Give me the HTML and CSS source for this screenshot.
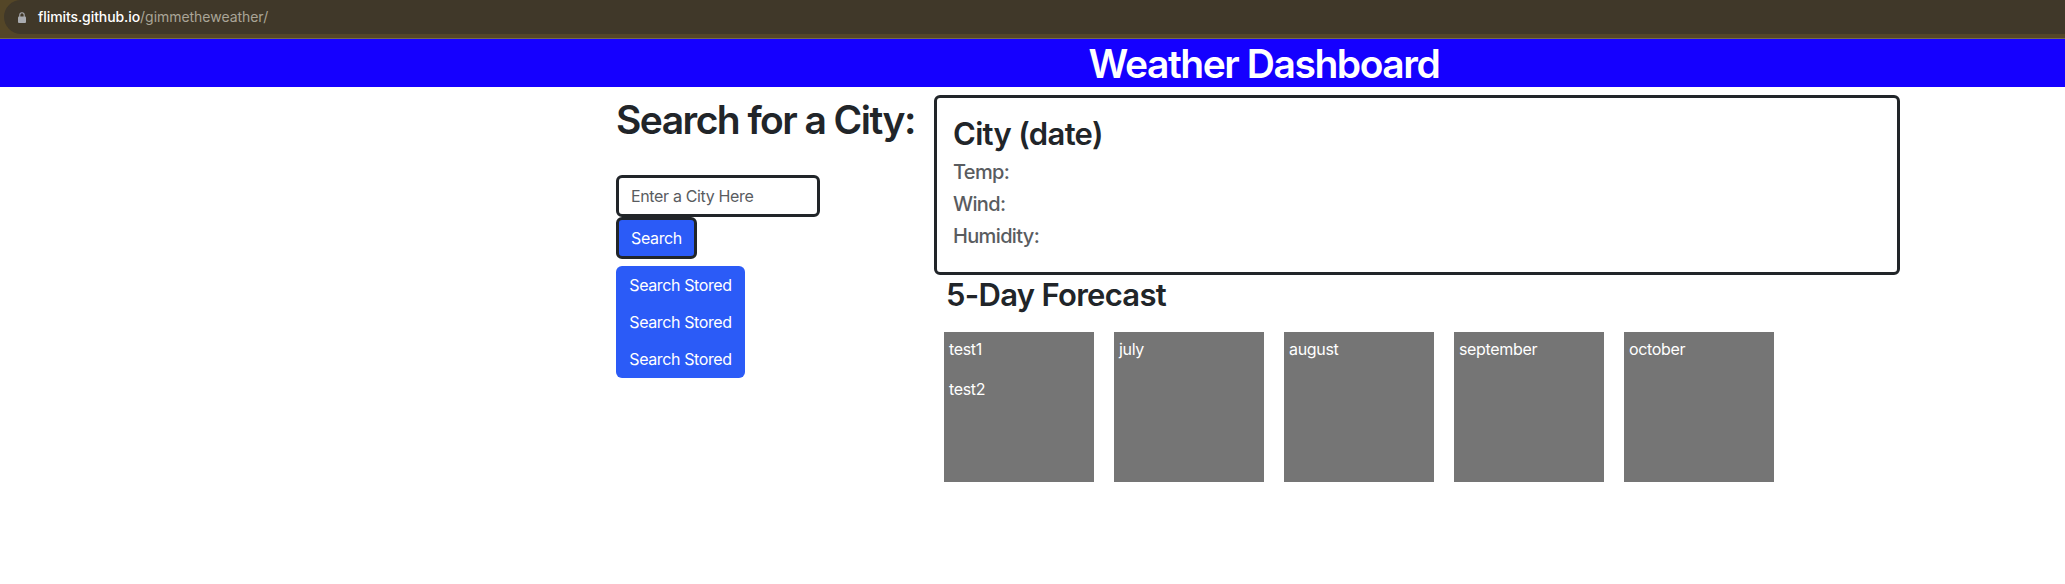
FILE: index.html
```
<!DOCTYPE html>
<html lang="en">
<head>
<meta charset="utf-8">
<title>Weather Dashboard</title>
<link rel="stylesheet" href="styles.css">
</head>
<body>
<div class="browser-bar">
  <div class="address">
    <svg class="lock" width="8" height="11" viewBox="0 0 8 11"><path d="M1.8 5V2.9a2.2 2.2 0 0 1 4.4 0V5" fill="none" stroke="currentColor" stroke-width="1.1"/><rect x="0" y="4.6" width="8" height="6.4" rx="1" fill="currentColor"/></svg>
    <span class="host">flimits.github.io</span><span class="path">/gimmetheweather/</span>
  </div>
</div>
<header class="banner"><h1 class="banner-title">Weather Dashboard</h1></header>
<main class="layout">
  <section class="search">
    <h1 class="search-title">Search for a City:</h1>
    <input class="city-input" type="text" placeholder="Enter a City Here">
    <button class="search-btn">Search</button>
    <div class="stored">
      <button class="stored-btn">Search Stored</button>
      <button class="stored-btn">Search Stored</button>
      <button class="stored-btn">Search Stored</button>
    </div>
  </section>
  <section class="weather">
    <div class="card">
      <h2 class="card-title">City (date)</h2>
      <h5 class="stat">Temp:</h5>
      <h5 class="stat">Wind:</h5>
      <h5 class="stat">Humidity:</h5>
    </div>
    <h2 class="forecast-title">5-Day Forecast</h2>
    <div class="days">
      <div class="day"><p>test1</p><p>test2</p></div>
      <div class="day"><p>july</p></div>
      <div class="day"><p>august</p></div>
      <div class="day"><p>september</p></div>
      <div class="day"><p>october</p></div>
    </div>
  </section>
</main>
</body>
</html>
```

FILE: styles.css
```
* { box-sizing: border-box; }
body { margin: 0; background: #fff; color: #212529; font: 400 16px/24px Inter, "Liberation Sans", sans-serif; }
h1, h2, h5, p { margin: 0; }
h1, h2 { font-weight: 570; }
h5 { font-weight: 540; }
button, input { font: inherit; margin: 0; }

.browser-bar { height: 39px; padding-left: 4px; background: #544627; border-bottom: 1px solid #736b50; }
.address { display: flex; align-items: center; height: 34px; padding-left: 14px; border-radius: 17px 0 0 17px; background: #403829; font-size: 14px; line-height: 34px; }
.lock { margin-right: 12px; color: #a9abb0; }
.host { color: #fff; font-weight: 500; letter-spacing: -0.08px; }
.path { color: #aaa597; letter-spacing: -0.04px; }

.banner { height: 48px; padding: 1px 0 0 463px; background: #1500ff; color: #fff; text-align: center; }
.banner-title { font-size: 39px; line-height: 48px; letter-spacing: -1.45px; }

.layout { display: flex; padding: 8px 165px 0 616px; }
.search { display: flex; flex-direction: column; align-items: flex-start; width: 318px; }
.search-title { padding-top: 1px; margin-bottom: 31px; font-size: 39px; line-height: 48px; letter-spacing: -1.55px; white-space: nowrap; }
.city-input { width: 204px; height: 42px; padding: 0 12px; border: 3px solid #212529; border-radius: 6px; background: #fff; color: #212529; letter-spacing: -0.35px; }
.city-input::placeholder { color: #595c5f; opacity: 1; }
.search-btn { width: 81px; height: 42px; padding: 0; border: 3px solid #212529; border-radius: 6px; background: #2b5bf7; color: #fff; letter-spacing: -0.38px; }
.stored { display: flex; flex-direction: column; width: 129px; height: 112px; margin-top: 7px; border-radius: 6px; background: #2b5bf7; }
.stored-btn { height: 37px; padding: 0; border: 0; background: none; color: #fff; letter-spacing: -0.38px; }

.weather { flex: 1; }
.card { height: 180px; padding: 16px; border: 3px solid #212529; border-radius: 6px; }
.card-title { padding-top: 1px; margin-bottom: 7px; font-size: 31px; line-height: 38px; letter-spacing: -0.68px; }
.stat { margin-bottom: 8px; color: #595c5f; font-size: 20px; line-height: 24px; letter-spacing: -0.65px; }
.forecast-title { padding: 1px 0 0 12px; font-size: 31px; line-height: 38px; letter-spacing: -0.7px; }
.days { display: flex; gap: 20px; margin: 18px 0 0 10px; }
.day { width: 150px; height: 150px; padding: 5px; background: #757575; color: #fff; letter-spacing: -0.33px; }
.day p { margin-bottom: 16px; }
```
